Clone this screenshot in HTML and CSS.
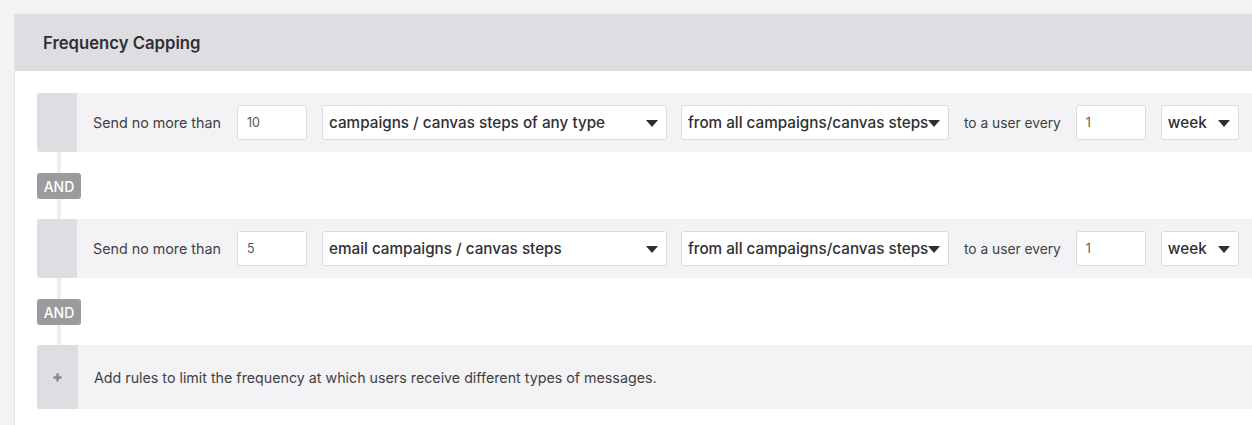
FILE: index.html
```html
<!DOCTYPE html>
<html>
<head>
<meta charset="utf-8">
<link rel="stylesheet" href="styles.css">
</head>
<body>
<div class="card">
  <div class="card-header">Frequency Capping</div>
  <div class="card-body">
    <div class="rule">
      <div class="tab"></div>
      <div class="rule-content">
        <span class="label">Send no more than</span>
        <div class="input w70">10</div>
        <div class="select w345"><span class="arrow"></span><span class="sel-text">campaigns / canvas steps of any type</span></div>
        <div class="select w268"><span class="arrow"></span><span class="sel-text">from all campaigns/canvas steps</span></div>
        <span class="label every">to a user every</span>
        <div class="input w70">1</div>
        <div class="select w78"><span class="arrow"></span><span class="sel-text">week</span></div>
      </div>
    </div>
    <div class="connector">
      <div class="line top"></div>
      <div class="and">AND</div>
      <div class="line bottom"></div>
    </div>
    <div class="rule">
      <div class="tab"></div>
      <div class="rule-content">
        <span class="label">Send no more than</span>
        <div class="input w70">5</div>
        <div class="select w345"><span class="arrow"></span><span class="sel-text">email campaigns / canvas steps</span></div>
        <div class="select w268"><span class="arrow"></span><span class="sel-text">from all campaigns/canvas steps</span></div>
        <span class="label every">to a user every</span>
        <div class="input w70">1</div>
        <div class="select w78"><span class="arrow"></span><span class="sel-text">week</span></div>
      </div>
    </div>
    <div class="connector">
      <div class="line top"></div>
      <div class="and">AND</div>
      <div class="line bottom"></div>
    </div>
    <div class="rule add">
      <div class="tab plus-tab">
        <svg width="9" height="9" viewBox="0 0 9 9"><path d="M3.3 0.5h2.4v2.8h2.8v2.4H5.7v2.8H3.3V5.7H0.5V3.3h2.8z" fill="#86868b"/></svg>
      </div>
      <div class="rule-content">
        <span class="add-text">Add rules to limit the frequency at which users receive different types of messages.</span>
      </div>
    </div>
  </div>
</div>
</body>
</html>
```

FILE: styles.css
```css
html, body {
  margin: 0;
  padding: 0;
  overflow: hidden;
}
body {
  background: #f3f3f5;
  font-family: "Inter", "Liberation Sans", sans-serif;
  color: #3a3a3e;
  width: 1252px;
  height: 425px;
}
.card {
  margin: 14px 0 0 14px;
  width: 1320px;
  background: #ffffff;
  border-left: 1px solid #e4e4e8;
  min-height: 420px;
}
.card-header {
  background: #dedde2;
  height: 57px;
  display: flex;
  align-items: center;
  padding-left: 28px;
  font-size: 16.7px;
  font-weight: 600;
  color: #2f2f33;
}
.card-body {
  padding: 22px 0 0 22px;
}
.rule {
  display: flex;
  height: 59px;
  background: #f3f3f5;
  border-radius: 3px 0 0 3px;
}
.rule.add {
  height: 64px;
}
.tab {
  width: 40px;
  flex: none;
  background: #dedde2;
  border-radius: 3px 0 0 3px;
}
.plus-tab {
  display: flex;
  align-items: center;
  justify-content: center;
  padding-right: 1px;
}
.rule-content {
  display: flex;
  align-items: center;
  padding-left: 16px;
}
.label {
  font-size: 14.3px;
  color: #3f3f44;
  margin-right: 16px;
}
.label.every {
  font-size: 13.75px;
  margin-right: 15px;
}
.input {
  box-sizing: border-box;
  height: 35px;
  background: #fff;
  border: 1px solid #dcdce0;
  border-radius: 3px;
  font-size: 12.5px;
  color: #555;
  padding-left: 9px;
  display: flex;
  align-items: center;
  margin-right: 15px;
}
.select {
  box-sizing: border-box;
  height: 35px;
  background: #fff;
  border: 1px solid #dcdce0;
  border-radius: 3px;
  font-size: 15.25px;
  font-weight: 500;
  color: #2f2f33;
  padding-left: 6px;
  display: flex;
  align-items: center;
  margin-right: 15px;
  position: relative;
  white-space: nowrap;
  overflow: hidden;
}
.sel-text {
  position: relative;
}
.w70 { width: 70px; }
.w345 { width: 345px; margin-right: 14px; }
.w268 { width: 268px; }
.w78 { width: 78px; }
.arrow {
  position: absolute;
  right: 8px;
  top: 14px;
  width: 0;
  height: 0;
  border-left: 6px solid transparent;
  border-right: 6px solid transparent;
  border-top: 7px solid #2f2f33;
}
.connector {
  display: flex;
  flex-direction: column;
}
.line {
  width: 4px;
  margin-left: 20px;
  background: #eeeef0;
}
.line.top { height: 21px; }
.line.bottom { height: 20px; }
.and {
  width: 44px;
  height: 26px;
  box-sizing: border-box;
  background: #9b9b9e;
  color: #fff;
  border-radius: 3px;
  font-size: 14px;
  font-weight: 500;
  display: flex;
  align-items: center;
  justify-content: center;
}
.add-text {
  font-size: 14.25px;
  color: #3f3f44;
}
```
